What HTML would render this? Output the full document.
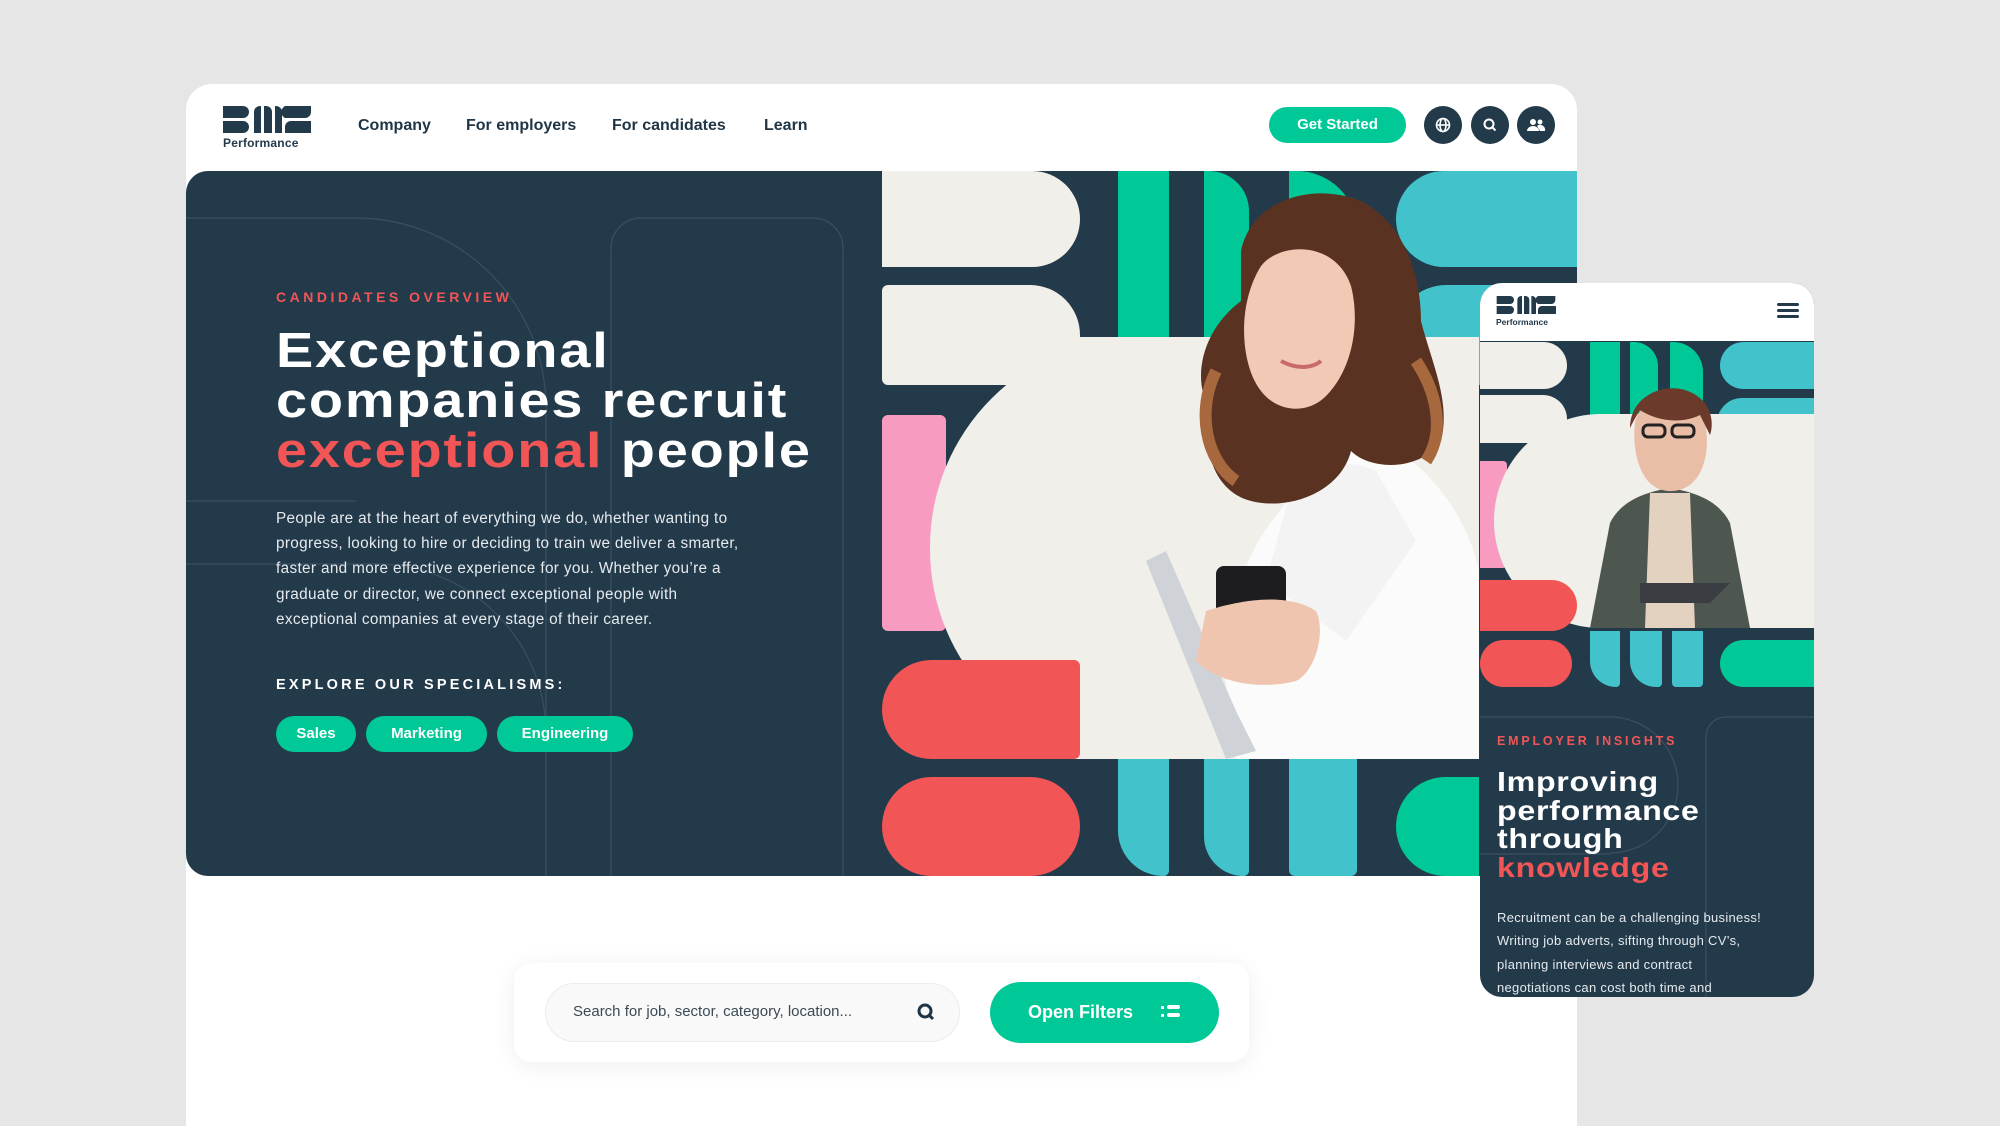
<!DOCTYPE html>
<html style="overflow:hidden"><head><meta charset="utf-8"><style>
*{margin:0;padding:0;box-sizing:border-box}
html,body{width:2000px;height:1126px;overflow:hidden}
body{background:#e6e6e7;position:relative;font-family:"Liberation Sans",sans-serif}
.a{position:absolute}
.card{left:186px;top:84px;width:1391px;height:1042px;background:#fff;border-radius:26px 26px 0 0}
.hero{left:186px;top:171px;width:1391px;height:705px;background:#233a4b;border-radius:22px 0 0 22px;overflow:hidden}
.nav{top:117px;font-size:16px;font-weight:bold;color:#1f3545}
.ic{width:38px;height:38px;border-radius:50%;background:#233a4b;top:106px}
.h1{left:276px;top:326px;font-size:49px;font-weight:bold;color:#fff;line-height:50px;letter-spacing:1.6px;transform:scaleX(1.14);transform-origin:0 0;white-space:nowrap}
.p{left:276px;top:506px;font-size:15.3px;line-height:25.2px;color:#e6eaee;letter-spacing:.35px;white-space:nowrap}
.pill{top:716px;height:36px;border-radius:18px;background:#00c896;color:#fff;font-weight:bold;font-size:15px;line-height:36px;text-align:center}
.cr{background:#f0efea}.gr{background:#00c896}.tl{background:#42c3cb}.rd{background:#f25555}.pk{background:#f79cc0}
</style></head><body>
<div class="a card"></div>
<svg class="a" style="left:223px;top:106px" width="88" height="27" viewBox="0 0 88 27">
<g fill="#233a4b"><path d="M0 0h20a6 6 0 0 1 0 12H0z"/><path d="M0 15h20a6 6 0 0 1 0 12H0z"/>
<path d="M31 27V6a6 6 0 0 1 6-6h1v27z"/><path d="M41 27V0h2a6 6 0 0 1 6 6v21z"/><path d="M52 27V0h1a6 6 0 0 1 6 6v21z"/>
<path d="M68 0h20v6a6 6 0 0 1-6 6H62a6 6 0 0 1 6-12z"/><path d="M68 15h20a6 6 0 0 1-6 12H62v-6a6 6 0 0 1 6-6z"/></g></svg>
<div class="a" style="left:223px;top:136px;font-size:12px;color:#233a4b;font-weight:bold;letter-spacing:.2px">Performance</div>
<div class="a nav" style="left:358px">Company</div>
<div class="a nav" style="left:466px">For employers</div>
<div class="a nav" style="left:612px">For candidates</div>
<div class="a nav" style="left:764px">Learn</div>
<div class="a" style="left:1269px;top:107px;width:137px;height:36px;border-radius:18px;background:#00c896;color:#fff;font-weight:bold;font-size:15px;line-height:36px;text-align:center">Get Started</div>
<div class="a ic" style="left:1424px"><svg width="38" height="38"><g fill="none" stroke="#fff" stroke-width="1.6"><circle cx="19" cy="19" r="6.5"/><ellipse cx="19" cy="19" rx="3" ry="6.5"/><path d="M12.5 19h13"/></g></svg></div>
<div class="a ic" style="left:1471px"><svg width="38" height="38"><g fill="none" stroke="#fff" stroke-width="2"><circle cx="18" cy="18" r="4.5"/><path d="M21.5 21.5l3 3"/></g></svg></div>
<div class="a ic" style="left:1517px"><svg width="38" height="38"><g fill="#fff"><circle cx="16" cy="16" r="3"/><circle cx="23" cy="16" r="2.5"/><path d="M10 25a6 5 0 0 1 12 0z"/><path d="M20 20a5 5 0 0 1 8 5h-5z"/></g></svg></div>

<div class="a hero">
<svg class="a" style="left:0;top:0" width="700" height="705"><g fill="none" stroke="#3a5062" stroke-width="1.2">
<path d="M0 47h170a190 190 0 0 1 190 190v468"/><path d="M0 330h170"/><path d="M0 393h190a170 170 0 0 1 170 170v142"/>
<path d="M425 705V77a30 30 0 0 1 30-30h172a30 30 0 0 1 30 30v628"/></g></svg>
<div class="a cr" style="left:696px;top:0;width:198px;height:96px;border-radius:0 48px 48px 0"></div>
<div class="a cr" style="left:696px;top:114px;width:198px;height:100px;border-radius:6px 50px 0 6px"></div>
<div class="a gr" style="left:932px;top:0;width:51px;height:240px"></div>
<div class="a gr" style="left:1018px;top:0;width:45px;height:240px;border-radius:0 40px 0 0"></div>
<div class="a gr" style="left:1103px;top:0;width:68px;height:240px;border-radius:0 60px 0 0"></div>
<div class="a tl" style="left:1210px;top:0;width:181px;height:96px;border-radius:48px 0 0 48px"></div>
<div class="a tl" style="left:1210px;top:114px;width:181px;height:100px;border-radius:50px 0 0 0"></div>
<div class="a pk" style="left:696px;top:244px;width:64px;height:216px;border-radius:6px"></div>
<div class="a cr" style="left:744px;top:166px;width:549px;height:422px;border-radius:210px 0 0 210px"></div>
<div class="a cr" style="left:880px;top:166px;width:413px;height:422px"></div>
<div class="a rd" style="left:696px;top:489px;width:198px;height:99px;border-radius:50px 6px 6px 50px"></div>
<div class="a rd" style="left:696px;top:606px;width:198px;height:99px;border-radius:50px"></div>
<div class="a tl" style="left:932px;top:588px;width:51px;height:117px;border-radius:0 0 6px 50px"></div>
<div class="a tl" style="left:1018px;top:588px;width:45px;height:117px;border-radius:0 0 6px 44px"></div>
<div class="a tl" style="left:1103px;top:588px;width:68px;height:117px;border-radius:0 0 6px 6px"></div>
<div class="a gr" style="left:1210px;top:606px;width:83px;height:99px;border-radius:50px 0 0 50px"></div>
<svg class="a" style="left:880px;top:0" width="420" height="588">
<path d="M300 260c60 30 100 80 113 140v188H170c-20-80-10-170 30-230 30-40 60-80 100-98z" fill="#fbfbfb"/>
<path d="M230 300c20-10 60-10 80 0l40 70-70 100-80-60z" fill="#f3f3f3"/>
<path d="M175 80c10-50 70-70 120-50 40 20 60 70 60 120 10 40 30 80 20 120-20 30-70 30-90 10-10 40-60 60-100 50-40-10-50-60-40-90-20-30-10-80 30-110z" fill="#5a3222"/>
<path d="M195 95c20-25 75-25 90 20 10 40 0 85-25 110-20 20-50 15-65-5-20-25-25-85 0-125z" fill="#f1c9b4"/>
<path d="M215 190c15 8 30 8 40 0" stroke="#c96a6a" stroke-width="4" fill="none"/>
<path d="M150 200c-20 40-10 90 20 110M350 190c20 30 30 70 10 100" stroke="#a8683d" stroke-width="12" fill="none"/>
<path d="M80 390l20-10 70 160 20 40-30 8z" fill="#cfd3d8"/>
<rect x="150" y="395" width="70" height="95" rx="8" fill="#1d1d1f"/>
<path d="M140 440c30-10 80-20 110 0 10 20 0 60-20 70-40 10-80 0-100-20z" fill="#efc5b0"/>
</svg>
</div>

<div class="a" style="left:276px;top:289px;font-size:14px;font-weight:bold;color:#f25555;letter-spacing:3.5px">CANDIDATES OVERVIEW</div>
<div class="a h1">Exceptional<br>companies recruit<br><span style="color:#f25555">exceptional</span> people</div>
<div class="a p">People are at the heart of everything we do, whether wanting to<br>progress, looking to hire or deciding to train we deliver a smarter,<br>faster and more effective experience for you. Whether you’re a<br>graduate or director, we connect exceptional people with<br>exceptional companies at every stage of their career.</div>
<div class="a" style="left:276px;top:677px;font-size:14.5px;font-weight:bold;color:#fff;letter-spacing:3.2px">EXPLORE OUR SPECIALISMS:</div>
<div class="a pill" style="left:276px;width:80px">Sales</div>
<div class="a pill" style="left:366px;width:121px">Marketing</div>
<div class="a pill" style="left:497px;width:136px">Engineering</div>

<div class="a" style="left:514px;top:963px;width:735px;height:99px;background:#fff;border-radius:18px;box-shadow:0 4px 24px rgba(0,0,0,.07)"></div>
<div class="a" style="left:545px;top:983px;width:415px;height:59px;background:#f9f9f9;border:1px solid #ececec;border-radius:30px"></div>
<div class="a" style="left:573px;top:1003px;font-size:15px;color:#3c4a55">Search for job, sector, category, location...</div>
<svg class="a" style="left:916px;top:1002px" width="20" height="20"><circle cx="9" cy="9" r="6" fill="none" stroke="#1f3545" stroke-width="3"/><path d="M13 13l4 4" stroke="#1f3545" stroke-width="3"/></svg>
<div class="a" style="left:990px;top:982px;width:229px;height:61px;background:#00c896;border-radius:31px;color:#fff;font-weight:bold;font-size:18px;line-height:61px;padding-left:38px">Open Filters</div>
<svg class="a" style="left:1161px;top:1004px" width="22" height="16"><g fill="#fff"><rect x="0" y="2" width="3" height="3"/><rect x="0" y="10" width="3" height="3"/><rect x="6" y="1" width="13" height="4" rx="2"/><rect x="6" y="9" width="13" height="4" rx="2"/></g></svg>

<div class="a" style="left:1480px;top:283px;width:334px;height:714px;background:#233a4b;border-radius:22px;overflow:hidden">
<div class="a" style="left:0;top:0;width:334px;height:58px;background:#fff"></div>
<svg class="a" style="left:16px;top:13px" width="60" height="18" viewBox="0 0 88 27"><g fill="#233a4b"><path d="M0 0h20a6 6 0 0 1 0 12H0z"/><path d="M0 15h20a6 6 0 0 1 0 12H0z"/><path d="M31 27V6a6 6 0 0 1 6-6h1v27z"/><path d="M41 27V0h2a6 6 0 0 1 6 6v21z"/><path d="M52 27V0h1a6 6 0 0 1 6 6v21z"/><path d="M68 0h20v6a6 6 0 0 1-6 6H62a6 6 0 0 1 6-12z"/><path d="M68 15h20a6 6 0 0 1-6 12H62v-6a6 6 0 0 1 6-6z"/></g></svg>
<div class="a" style="left:16px;top:34px;font-size:8.5px;font-weight:bold;color:#233a4b">Performance</div>
<div class="a" style="left:297px;top:20px;width:22px;height:3px;background:#233a4b;border-radius:2px;box-shadow:0 6px 0 #233a4b,0 12px 0 #233a4b"></div>
<div class="a cr" style="left:0;top:59px;width:87px;height:47px;border-radius:0 24px 24px 0"></div>
<div class="a cr" style="left:0;top:112px;width:87px;height:48px;border-radius:0 24px 0 0"></div>
<div class="a gr" style="left:110px;top:59px;width:30px;height:80px"></div>
<div class="a gr" style="left:150px;top:59px;width:28px;height:80px;border-radius:0 24px 0 0"></div>
<div class="a gr" style="left:190px;top:59px;width:33px;height:80px;border-radius:0 30px 0 0"></div>
<div class="a tl" style="left:240px;top:59px;width:94px;height:47px;border-radius:24px 0 0 24px"></div>
<div class="a tl" style="left:237px;top:115px;width:97px;height:49px;border-radius:25px 0 0 0"></div>
<div class="a pk" style="left:0;top:178px;width:27px;height:107px;border-radius:0 4px 4px 0"></div>
<div class="a cr" style="left:14px;top:131px;width:320px;height:214px;border-radius:107px 0 0 107px"></div>
<div class="a rd" style="left:0;top:297px;width:97px;height:51px;border-radius:0 26px 26px 0"></div>
<div class="a rd" style="left:0;top:357px;width:92px;height:47px;border-radius:24px"></div>
<div class="a tl" style="left:110px;top:348px;width:30px;height:56px;border-radius:0 0 4px 26px"></div>
<div class="a tl" style="left:150px;top:348px;width:32px;height:56px;border-radius:0 0 4px 26px"></div>
<div class="a tl" style="left:192px;top:348px;width:31px;height:56px;border-radius:0 0 4px 4px"></div>
<div class="a gr" style="left:240px;top:357px;width:94px;height:47px;border-radius:24px 0 0 24px"></div>
<svg class="a" style="left:60px;top:100px" width="260" height="245">
<path d="M70 140c10-20 30-30 60-35 30 5 50 15 60 35l20 105H50z" fill="#4e5650"/>
<path d="M110 110h40l5 135h-50z" fill="#e4d2c0"/>
<path d="M95 40c5-30 60-35 70 0 5 25 0 50-15 62-15 10-35 8-45-8-10-15-12-38-10-54z" fill="#e9bda6"/>
<path d="M90 45c0-30 30-45 55-38 25 8 30 30 25 45l-10-20c-20 10-45 5-60-5-5 8-8 14-10 18z" fill="#6b3a2a"/>
<rect x="103" y="42" width="22" height="12" rx="5" fill="none" stroke="#222" stroke-width="3"/><rect x="132" y="42" width="22" height="12" rx="5" fill="none" stroke="#222" stroke-width="3"/>
<path d="M100 200h90l-20 20h-70z" fill="#3a3d42"/>
</svg>
<svg class="a" style="left:0;top:400px" width="334" height="314"><g fill="none" stroke="#3a5062" stroke-width="1.2"><path d="M0 34h130a68 68 0 0 1 0 136"/><path d="M0 171h130"/><path d="M226 314V54a20 20 0 0 1 20-20h88"/></g></svg>
<div class="a" style="left:17px;top:451px;font-size:12.5px;font-weight:bold;color:#f25555;letter-spacing:2.8px">EMPLOYER INSIGHTS</div>
<div class="a" style="left:17px;top:485px;font-size:27.5px;font-weight:bold;color:#fff;line-height:28.5px;letter-spacing:.6px;transform:scaleX(1.17);transform-origin:0 0;white-space:nowrap">Improving<br>performance<br>through<br><span style="color:#f25555">knowledge</span></div>
<div class="a" style="left:17px;top:623px;font-size:13px;color:#e6eaee;line-height:23.3px;white-space:nowrap;letter-spacing:.3px">Recruitment can be a challenging business!<br>Writing job adverts, sifting through CV’s,<br>planning interviews and contract<br>negotiations can cost both time and</div>
</div>
</body></html>
